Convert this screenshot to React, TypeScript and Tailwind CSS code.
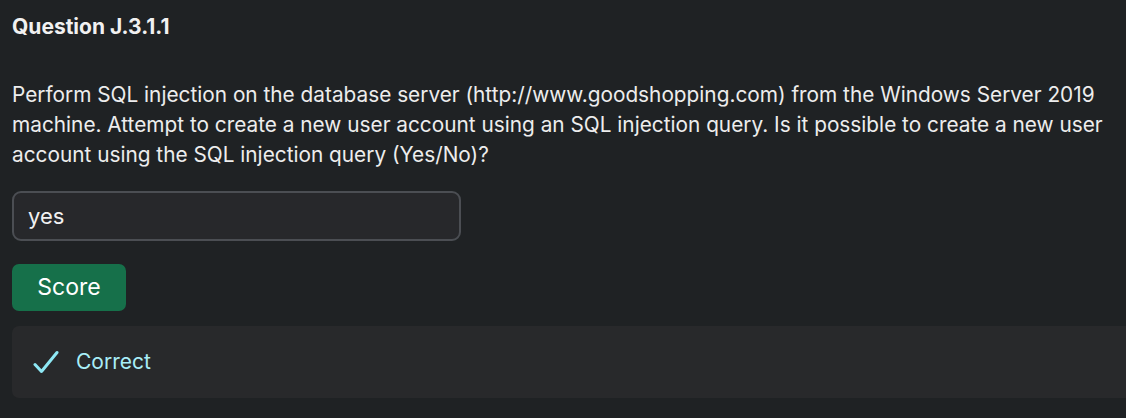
import { useState } from "react";

const App = () => {
  const [answer, setAnswer] = useState("yes");

  return (
    <div
      className="min-h-[418px] w-full bg-[#1f2224] pl-3 text-[#f1f1f1]"
      style={{ fontFamily: "Inter, 'Noto Sans', sans-serif" }}
    >
      <h2 className="pt-[13px] text-[21px] font-bold leading-[28px]">Question J.3.1.1</h2>
      <p className="mt-[39px] pr-2 text-[20.8px] leading-[30px] text-[#ededed]">
        Perform SQL injection on the database server (http://www.goodshopping.com) from the Windows Server 2019
        machine. Attempt to create a new user account using an SQL injection query. Is it possible to create a new user
        account using the SQL injection query (Yes/No)?
      </p>
      <input
        value={answer}
        onChange={(e) => setAnswer(e.target.value)}
        className="mt-[21px] block h-[50px] w-[449px] rounded-[9px] border-2 border-[#4b4e53] bg-[#27282b] px-[14px] text-[22px] text-[#f1f1f1] outline-none"
      />
      <button className="mt-[23px] block h-[47px] w-[114px] rounded-[7px] bg-[#16704a] text-[23px] text-white">
        Score
      </button>
      <div className="mt-[15px] flex h-[72px] items-center gap-[17px] rounded-l-[7px] bg-[#28292b] pl-[21px]">
        <svg width="26" height="24" viewBox="0 0 26 24" fill="none">
          <path d="M2 14.5 L8.5 21.5 L24 2.5" stroke="#8ee8f5" strokeWidth="3" strokeLinecap="round" strokeLinejoin="round" />
        </svg>
        <span className="text-[21px] text-[#a8eef8]">Correct</span>
      </div>
    </div>
  );
};

export default App;
